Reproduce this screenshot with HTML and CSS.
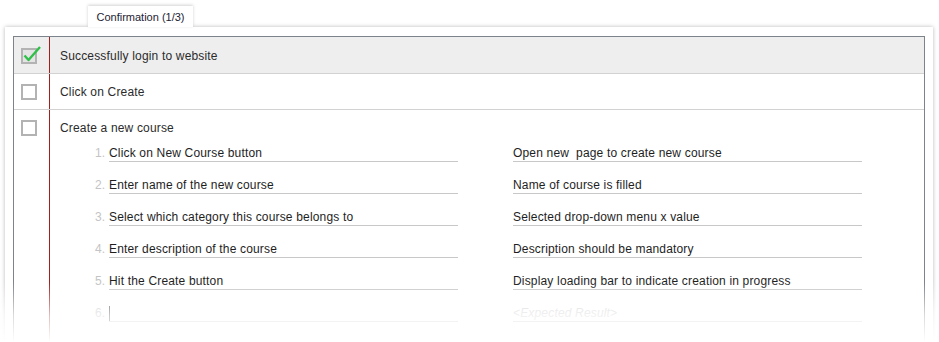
FILE: index.html
```html
<!DOCTYPE html>
<html lang="en">
<head>
    <meta charset="UTF-8">
    <title>Confirmation</title>
    <link rel="stylesheet" href="styles.css">
</head>
<body>
    <div class="page">
        <div class="tab">Confirmation (1/3)</div>
        <div class="panel">
            <div class="grid">
                <div class="row row-done">
                    <div class="check-cell">
                        <svg class="checkbox" width="22" height="22" viewBox="0 0 22 22">
                            <rect x="1" y="5" width="14" height="14" fill="#e4e4e4" stroke="#b3b3b3" stroke-width="2"/>
                            <path d="M3.5 11.5 L7.5 16 L19 3" fill="none" stroke="#2fc04a" stroke-width="2.4" stroke-linejoin="round"/>
                        </svg>
                    </div>
                    <div class="text-cell">Successfully login to website</div>
                </div>
                <div class="row">
                    <div class="check-cell">
                        <svg class="checkbox" width="22" height="22" viewBox="0 0 22 22">
                            <rect x="1" y="5" width="14" height="14" fill="#fff" stroke="#b3b3b3" stroke-width="2"/>
                        </svg>
                    </div>
                    <div class="text-cell">Click on Create</div>
                </div>
                <div class="row row-last">
                    <div class="check-cell">
                        <svg class="checkbox" width="22" height="22" viewBox="0 0 22 22">
                            <rect x="1" y="5" width="14" height="14" fill="#fff" stroke="#b3b3b3" stroke-width="2"/>
                        </svg>
                    </div>
                    <div class="text-cell">
                        <div class="title">Create a new course</div>
                        <div class="steps">
                            <div class="step">
                                <span class="num">1.</span>
                                <span class="field">Click on New Course button</span>
                                <span class="field result">Open new&nbsp; page to create new course</span>
                            </div>
                            <div class="step">
                                <span class="num">2.</span>
                                <span class="field">Enter name of the new course</span>
                                <span class="field result">Name of course is filled</span>
                            </div>
                            <div class="step">
                                <span class="num">3.</span>
                                <span class="field">Select which category this course belongs to</span>
                                <span class="field result">Selected drop-down menu x value</span>
                            </div>
                            <div class="step">
                                <span class="num">4.</span>
                                <span class="field">Enter description of the course</span>
                                <span class="field result">Description should be mandatory</span>
                            </div>
                            <div class="step">
                                <span class="num">5.</span>
                                <span class="field">Hit the Create button</span>
                                <span class="field result">Display loading bar to indicate creation in progress</span>
                            </div>
                            <div class="step">
                                <span class="num">6.</span>
                                <span class="field"><span class="caret"></span></span>
                                <span class="field result placeholder">&lt;Expected Result&gt;</span>
                            </div>
                        </div>
                    </div>
                </div>
            </div>
        </div>
        <div class="fade"></div>
    </div>
</body>
</html>
```

FILE: styles.css
```css
/* Base */
body {
    margin: 0;
    background-color: #fff;
    font-family: "Liberation Sans", Arial, sans-serif;
    font-size: 12px;
    letter-spacing: 0.17px;
    color: #2b2b2b;
    overflow: hidden;
}
.page {
    position: relative;
    height: 342px;
    padding: 6px 0 0 5px;
    box-sizing: border-box;
}
/* Tab */
.tab {
    position: relative;
    z-index: 2;
    width: 105px;
    height: 21px;
    margin-left: 83px;
    box-sizing: border-box;
    padding-top: 5px;
    text-align: center;
    font-size: 11px;
    letter-spacing: 0;
    color: #1c2233;
    background-color: #fff;
    box-shadow: 0 -1px 3px rgba(0, 0, 0, 0.18);
}
/* Panel */
.panel {
    width: 928px;
    height: 320px;
    box-sizing: border-box;
    padding: 9px 8px 0 8px;
    background-color: #fff;
    box-shadow: 0 0 4px rgba(0, 0, 0, 0.28);
}
.grid {
    height: 100%;
    border: 1px solid #7d838b;
    border-bottom: none;
}
.row {
    display: flex;
    border-bottom: 1px solid #d2d2d2;
}
.row-done {
    background-color: #eeeeee;
}
.row-last {
    border-bottom: none;
}
.check-cell {
    width: 35px;
    flex-shrink: 0;
    padding-left: 7px;
    box-sizing: border-box;
}
.checkbox {
    display: block;
    margin-top: 6px;
}
.row-done .checkbox {
    margin-top: 7px;
}
.text-cell {
    flex: 1;
    border-left: 1px solid #a51d1d;
    padding: 11px 10px 0 10px;
    height: 24px;
    line-height: 14px;
}
.row-done .text-cell {
    padding-top: 12px;
}
.row-last .text-cell {
    height: 230px;
}
/* Steps */
.steps {
    padding-top: 11px;
}
.step {
    display: flex;
    margin-bottom: 16px;
}
.num {
    width: 45px;
    text-align: right;
    padding-right: 4px;
    color: #c4c4c4;
    letter-spacing: 0;
    line-height: 15px;
}
.field {
    width: 349px;
    height: 15px;
    line-height: 15px;
    border-bottom: 1px solid #c8c8c8;
    color: #1e1e1e;
    white-space: nowrap;
}
.result {
    margin-left: 55px;
}
.placeholder {
    color: #d0d0d0;
    font-style: italic;
}
.caret {
    display: inline-block;
    width: 1px;
    height: 15px;
    vertical-align: top;
    background-color: #444;
}
/* Bottom fade */
.fade {
    position: absolute;
    left: 0;
    right: 0;
    bottom: 0;
    height: 60px;
    background: linear-gradient(rgba(255, 255, 255, 0), rgba(255, 255, 255, 0.7) 55%, #fff);
}
```
